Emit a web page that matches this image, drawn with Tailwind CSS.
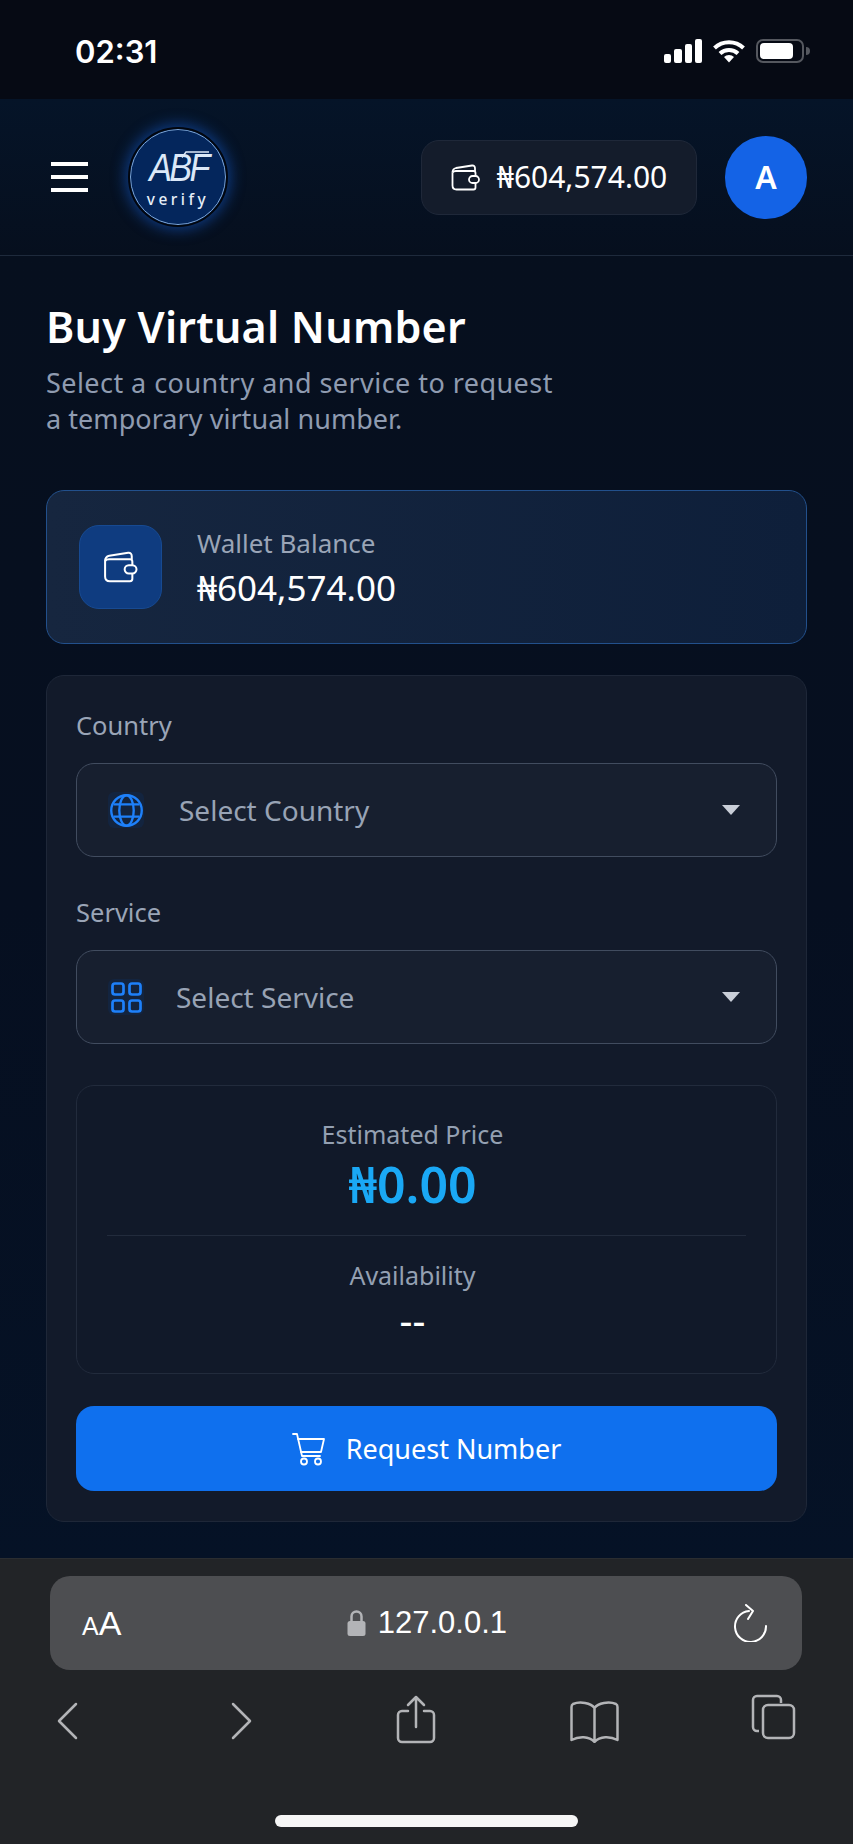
<!DOCTYPE html>
<html lang="en">
<head>
    <meta charset="UTF-8">
    <meta name="viewport" content="width=device-width, initial-scale=1.0">
    <title>Buy Virtual Number</title>
    <script src="https://cdn.jsdelivr.net/npm/@tailwindcss/browser@4"></script>
</head>
<body class="bg-[#060f1e] font-['Noto_Sans',sans-serif] text-white">
    <div class="w-[853px] h-[1844px] flex flex-col overflow-hidden">

        <!-- Status bar -->
        <div class="h-[99px] shrink-0 bg-[#060a14] flex items-start justify-between pl-[75px] pr-[43px] pt-[33px]">
            <span class="font-['Inter',sans-serif] text-[31px] leading-[38px] font-semibold">02:31</span>
            <div class="flex items-center gap-[11px] pt-[6px]">
                <svg class="w-[38px] h-[24px]" viewBox="0 0 38 24" fill="#fff"><rect x="0" y="15" width="7" height="9" rx="2"/><rect x="10" y="10" width="8" height="14" rx="2"/><rect x="21" y="5" width="7" height="19" rx="2"/><rect x="31" y="0" width="7" height="24" rx="2"/></svg>
                <svg class="w-[32px] h-[24px]" viewBox="0 0 32 24" fill="none" stroke="#fff" stroke-width="4"><path d="M1.500 9a21 21 0 0 1 29 0"/><path d="M7 14.500a13 13 0 0 1 18 0"/><path d="M16 23.500l-5-5.500a7 7 0 0 1 10 0z" fill="#fff" stroke="none"/></svg>
                <div class="flex items-center">
                    <div class="w-[48px] h-[24px] rounded-[7px] border-2 border-[#55585f] p-[2px]"><div class="w-[33px] h-full rounded-[4px] bg-white"></div></div>
                    <div class="w-[4px] h-[8px] rounded-r-full bg-[#55585f] ml-[2px]"></div>
                </div>
            </div>
        </div>

        <!-- Header -->
        <header class="h-[157px] shrink-0 flex items-center justify-between pl-[51px] pr-[46px] border-b border-[#1e2a3c] bg-gradient-to-b from-[#051428] to-[#060f1e]">
            <div class="flex items-center gap-[42px]">
                <div class="w-[37px] flex flex-col gap-[9px]">
                    <div class="h-[4px] bg-white"></div>
                    <div class="h-[4px] bg-white"></div>
                    <div class="h-[4px] bg-white"></div>
                </div>
                <div class="relative w-[96px] h-[96px] rounded-full bg-[#04265c] border border-[#7ea7d8] outline-2 outline-[#02060e] shadow-[0_0_14px_5px_rgba(20,90,200,0.55)] flex flex-col items-center">
                    <div class="mt-[19px] h-[38px] font-['Liberation_Sans',sans-serif] italic text-[38px] leading-[38px] tracking-[-3px] scale-x-90 text-[#dbe8f8]">ABF</div>
                    <svg class="absolute left-[49px] top-[21px] w-[30px] h-[8px]" viewBox="0 0 30 8" fill="none" stroke="#dbe8f8" stroke-width="1.500"><path d="M2 6.500 6 1h23"/></svg>
                    <div class="mt-[3px] text-[15.500px] leading-[18px] tracking-[3.500px] font-medium text-[#e6eef8]">verify</div>
                </div>
            </div>
            <div class="flex items-center gap-[28px]">
                <div class="w-[276px] h-[75px] rounded-[18px] bg-[#141c2b] border border-[#1f2839] flex items-center justify-center gap-[17px]">
                    <svg class="w-[29px] h-[27px]" viewBox="0 0 29 27" fill="none" stroke="#fff" stroke-width="1.800" stroke-linejoin="round"><path d="M1.500 8.500C1.500 5.500 3 4.500 5 4l16-2.500c2-.2 3 1 3 3V7"/><path d="M1.500 8.500v13c0 2.500 1.500 4 4 4h17c1.500 0 2-1 2-2V19"/><path d="M1.500 8.500C2 7.500 3.500 7 5 7h17.500c1.500 0 2 1 2 2v3"/><rect x="18" y="12" width="10" height="7" rx="3.500"/></svg>
                    <span class="text-[30px] leading-[36px]">₦604,574.00</span>
                </div>
                <div class="w-[82px] h-[83px] rounded-full bg-[#1463e6] flex items-center justify-center text-[32px] font-semibold">A</div>
            </div>
        </header>

        <main class="flex-1 px-[46px] pt-[43px] flex flex-col bg-gradient-to-b from-[#060f1e] via-[#060f20] to-[#051226]">
            <h1 class="text-[43px] leading-[56px] tracking-[0.25px] font-semibold">Buy Virtual Number</h1>
            <p class="mt-[10px] text-[27px] leading-[36px] tracking-[0.45px] text-[#8f9bb0]">Select a country and service to request<br><span class="tracking-[0.05px]">a temporary virtual number.</span></p>

            <!-- Wallet -->
            <section class="mt-[53px] h-[154px] shrink-0 rounded-[18px] border border-[#22508c] bg-gradient-to-r from-[#16263f] to-[#0e1f3a] flex items-center pl-[32px] gap-[35px]">
                <div class="w-[83px] h-[84px] rounded-[20px] bg-[#0f3c80] border border-[#174a92] flex items-center justify-center">
                    <svg class="w-[35px] h-[32px]" viewBox="0 0 29 27" fill="none" stroke="#fff" stroke-width="1.700" stroke-linejoin="round"><path d="M1.500 8.500C1.500 5.500 3 4.500 5 4l16-2.500c2-.2 3 1 3 3V7"/><path d="M1.500 8.500v13c0 2.500 1.500 4 4 4h17c1.500 0 2-1 2-2V19"/><path d="M1.500 8.500C2 7.500 3.500 7 5 7h17.500c1.500 0 2 1 2 2v3"/><rect x="18" y="12" width="10" height="7" rx="3.500"/></svg>
                </div>
                <div class="flex flex-col">
                    <span class="text-[26px] leading-[36px] text-[#9aa5b7]">Wallet Balance</span>
                    <span class="mt-[5px] text-[35px] leading-[44px]">₦604,574.00</span>
                </div>
            </section>

            <!-- Form -->
            <section class="mt-[31px] h-[847px] shrink-0 rounded-[18px] border border-[#1e2738] bg-[#121a2a] px-[29px] pt-[32px]">
                <label class="block text-[25.500px] leading-[34px] text-[#9aa5b7]">Country</label>
                <div class="mt-[21px] h-[94px] rounded-[18px] border border-[#414c5f] bg-[#171f2f] flex items-center pl-[31px] pr-[36px]">
                    <div class="w-[36px] h-[36px] rounded-[6px] bg-[#13243f] flex items-center justify-center">
                        <svg class="w-[33px] h-[33px]" viewBox="0 0 32 32" fill="none" stroke="#1e80fa" stroke-width="2.300"><circle cx="16" cy="16" r="14.800"/><ellipse cx="16" cy="16" rx="7" ry="14.800"/><path d="M3.500 10h25M3.500 22h25"/></svg>
                    </div>
                    <span class="ml-[35px] text-[28px] leading-[36px] text-[#98a3b5]">Select Country</span>
                    <svg class="ml-auto w-[18px] h-[10px]" viewBox="0 0 18 10" fill="#c9ced8"><path d="M0 0h18l-9 10z"/></svg>
                </div>
                <label class="block mt-[38px] text-[25.500px] leading-[34px] text-[#9aa5b7]">Service</label>
                <div class="mt-[21px] h-[94px] rounded-[18px] border border-[#414c5f] bg-[#171f2f] flex items-center pl-[31px] pr-[36px]">
                    <div class="w-[36px] h-[36px] rounded-[6px] bg-[#13243f] flex items-center justify-center">
                        <svg class="w-[31px] h-[31px]" viewBox="0 0 31 31" fill="none" stroke="#1e80fa" stroke-width="2.700"><rect x="1.500" y="1.500" width="11" height="11" rx="2.500"/><rect x="18.500" y="1.500" width="11" height="11" rx="2.500"/><rect x="1.500" y="18.500" width="11" height="11" rx="2.500"/><rect x="18.500" y="18.500" width="11" height="11" rx="2.500"/></svg>
                    </div>
                    <span class="ml-[32px] text-[28px] leading-[36px] text-[#98a3b5]">Select Service</span>
                    <svg class="ml-auto w-[18px] h-[10px]" viewBox="0 0 18 10" fill="#c9ced8"><path d="M0 0h18l-9 10z"/></svg>
                </div>

                <!-- Summary -->
                <div class="mt-[41px] h-[289px] rounded-[18px] border border-[#222b3c] bg-[#111929] px-[30px] pt-[31px] flex flex-col items-center">
                    <span class="mr-[28px] text-[25px] leading-[34px] text-[#94a0b2]">Estimated Price</span>
                    <span class="mr-[28px] mt-[4px] text-[50px] leading-[58px] font-semibold text-[#1aa8f5]">₦0.00</span>
                    <div class="mt-[22px] w-full h-px bg-[#222b3c]"></div>
                    <span class="mr-[28px] mt-[22px] text-[25px] leading-[34px] text-[#94a0b2]">Availability</span>
                    <span class="mr-[28px] mt-[6px] text-[40px] leading-[44px]">--</span>
                </div>

                <button class="mt-[32px] w-full h-[85px] rounded-[18px] bg-[#0f70ee] flex items-center justify-center gap-[20px]">
                    <svg class="w-[34px] h-[34px]" viewBox="0 0 34 34" fill="none" stroke="#fff" stroke-width="1.800" stroke-linecap="round" stroke-linejoin="round"><path d="M1 2h4l5 22h18"/><path d="M6 7h26l-3 13H9"/><circle cx="12" cy="29.500" r="3"/><circle cx="26" cy="29.500" r="3"/></svg>
                    <span class="text-[27px] leading-[36px]">Request Number</span>
                </button>
            </section>
        </main>

        <!-- Browser bar -->
        <footer class="h-[286px] shrink-0 bg-[#222427] border-t border-[#2a2d31] px-[50px] pt-[17px] flex flex-col">
            <div class="h-[94px] w-[752px] rounded-[20px] bg-[#4d4e51] flex items-center justify-between pl-[32px] pr-[34px]">
                <span class="font-['Liberation_Sans',sans-serif] leading-none"><span class="text-[25px]">A</span><span class="text-[34px]">A</span></span>
                <div class="flex items-center gap-[12px] mr-[1.500px]">
                    <svg class="w-[19px] h-[26px]" viewBox="0 0 19 26" fill="none"><path d="M4.500 12V6.500a5 5 0 0 1 10 0V12" stroke="#b3b4b7" stroke-width="2.500"/><rect x="0.500" y="11" width="18" height="15" rx="2.500" fill="#b3b4b7"/></svg>
                    <span class="font-['Liberation_Sans',sans-serif] text-[31px] leading-[40px]">127.0.0.1</span>
                </div>
                <svg class="w-[34px] h-[38px]" viewBox="0 0 34 38" fill="none" stroke="#fff" stroke-width="2" stroke-linecap="round" stroke-linejoin="round"><path d="M15 7a15.500 15.500 0 1 0 17 15"/><path d="M12 1l7 6-5 8"/></svg>
            </div>
            <div class="relative mt-[21px] h-[58px]">
                <svg class="absolute left-[7px] top-[11px] w-[21px] h-[38px]" viewBox="0 0 21 38" fill="none" stroke="#b3b4b7" stroke-width="2.500" stroke-linecap="round" stroke-linejoin="round"><path d="M19 2 2 19l17 17"/></svg>
                <svg class="absolute left-[181px] top-[11px] w-[21px] h-[38px]" viewBox="0 0 21 38" fill="none" stroke="#b3b4b7" stroke-width="2.500" stroke-linecap="round" stroke-linejoin="round"><path d="M2 2l17 17L2 36"/></svg>
                <svg class="absolute left-[346px] top-[4px] w-[40px] h-[49px]" viewBox="0 0 40 49" fill="none" stroke="#b3b4b7" stroke-width="2.500" stroke-linecap="round" stroke-linejoin="round"><path d="M20 2v30M12 10l8-8 8 8"/><path d="M12 16H6a4 4 0 0 0-4 4v23a4 4 0 0 0 4 4h28a4 4 0 0 0 4-4V20a4 4 0 0 0-4-4h-6"/></svg>
                <svg class="absolute left-[520px] top-[10px] w-[49px] h-[42px]" viewBox="0 0 49 42" fill="none" stroke="#b3b4b7" stroke-width="2.500" stroke-linecap="round" stroke-linejoin="round"><path d="M24.500 7C21 2 10 0 3 3c-1 .5-1.500 1.500-1.500 3v33C9 35 19 35 24.500 41c5.500-6 15.500-6 23-2V6c0-1.500-.5-2.500-1.500-3-7-3-18-1-21.500 4zM24.500 7v34"/></svg>
                <svg class="absolute left-[701px] top-[3px] w-[45px] h-[46px]" viewBox="0 0 45 46" fill="none" stroke="#b3b4b7" stroke-width="2.500" stroke-linejoin="round"><path d="M8 37H6a4 4 0 0 1-4-4V6a4 4 0 0 1 4-4h20a4 4 0 0 1 4 4v3"/><rect x="12" y="11" width="31" height="33" rx="5"/></svg>
            </div>
            <div class="mt-[66px] ml-[225px] w-[303px] h-[12px] rounded-full bg-[#f6f6f6]"></div>
        </footer>
    </div>
</body>
</html>
